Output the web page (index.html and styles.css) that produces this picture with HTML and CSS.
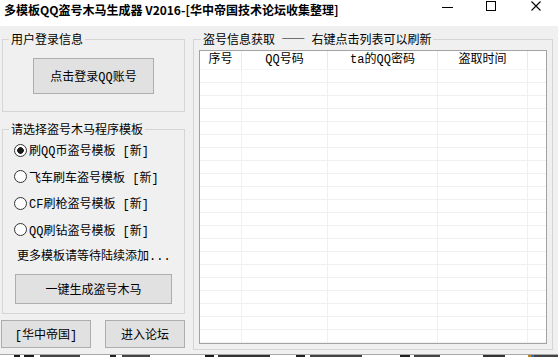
FILE: index.html
```html
<!DOCTYPE html>
<html lang="zh-CN">
<head>
<meta charset="utf-8">
<title>多模板QQ盗号木马生成器</title>
<link rel="stylesheet" href="styles.css">
</head>
<body>
<div class="window">
  <div class="titlebar">
    <span class="title">多模板QQ盗号木马生成器 V2016-[华中帝国技术论坛收集整理]</span>
    <div class="controls">
      <svg class="ic-min" width="11" height="11" viewBox="0 0 11 11"><line x1="0" y1="6.5" x2="11" y2="6.5" stroke="#000" stroke-width="1"/></svg>
      <svg class="ic-max" width="10" height="10" viewBox="0 0 10 10"><rect x="0.5" y="0.5" width="9" height="9" fill="none" stroke="#000" stroke-width="1"/></svg>
      <svg class="ic-close" width="10" height="10" viewBox="0 0 10 10"><path d="M0.5 0.5 L9.5 9.5 M9.5 0.5 L0.5 9.5" stroke="#000" stroke-width="1.1" fill="none"/></svg>
    </div>
  </div>
  <div class="client">
    <div class="left">
      <fieldset class="group g-login">
        <legend>用户登录信息</legend>
        <button class="btn btn-login">点击登录QQ账号</button>
      </fieldset>
      <fieldset class="group g-tpl">
        <legend>请选择盗号木马程序模板</legend>
        <div class="radio-row"><span class="radio checked"></span><span>刷QQ币盗号模板 [新]</span></div>
        <div class="radio-row"><span class="radio"></span><span>飞车刷车盗号模板 [新]</span></div>
        <div class="radio-row"><span class="radio"></span><span>CF刷枪盗号模板 [新]</span></div>
        <div class="radio-row"><span class="radio"></span><span>QQ刷钻盗号模板 [新]</span></div>
        <div class="more">更多模板请等待陆续添加...</div>
        <button class="btn btn-gen">一键生成盗号木马</button>
      </fieldset>
      <div class="bottom-btns">
        <button class="btn btn-hz">[华中帝国]</button>
        <button class="btn btn-forum">进入论坛</button>
      </div>
    </div>
    <fieldset class="group g-info">
      <legend>盗号信息获取 —— 右键点击列表可以刷新</legend>
      <div class="list">
        <div class="list-head">
          <div class="col c1">序号</div>
          <div class="col c2">QQ号码</div>
          <div class="col c3">ta的QQ密码</div>
          <div class="col c4">盗取时间</div>
          <div class="col c5"></div>
        </div>
        <div class="list-body">
          <div class="bcol c1"></div>
          <div class="bcol c2"></div>
          <div class="bcol c3"></div>
          <div class="bcol c4"></div>
          <div class="bcol c5"></div>
        </div>
      </div>
    </fieldset>
  </div>
  <div class="strip"></div>
</div>
</body>
</html>
```

FILE: styles.css
```css
* { box-sizing: border-box; }
html, body { margin: 0; padding: 0; background: #f0f0f0; }
body {
  width: 558px;
  height: 357px;
  overflow: hidden;
  font-family: "Liberation Mono", "Noto Sans CJK SC", monospace;
  font-size: 12px;
  color: #000;
}
.window {
  width: 558px;
  height: 357px;
  display: flex;
  flex-direction: column;
  overflow: hidden;
}
.titlebar {
  height: 26px;
  flex: none;
  background: #fff;
  display: flex;
  align-items: flex-start;
}
.title {
  font-family: "Noto Sans CJK SC", sans-serif;
  font-weight: bold;
  font-size: 12px;
  line-height: 14px;
  padding: 3px 0 0 4px;
  white-space: nowrap;
}
.controls {
  margin-left: auto;
  display: flex;
  align-items: flex-start;
  padding: 1px 17px 0 0;
}
.ic-min { display: block; }
.ic-max { display: block; margin-left: 33px; }
.ic-close { display: block; margin-left: 35px; }

.client {
  flex: none;
  height: 328px;
  background: #f0f0f0;
  display: flex;
  align-items: flex-start;
  padding-top: 6px;
}
.left {
  margin-left: 2px;
  width: 183px;
  display: flex;
  flex-direction: column;
}
.group {
  margin: 0;
  padding: 0;
  min-width: 0;
  border: 1px solid #d5d5d5;
}
.group legend {
  padding: 0 2px;
  margin-left: 6px;
  font-size: 12px;
  line-height: 14px;
  font-family: "Noto Sans CJK SC", sans-serif;
  white-space: nowrap;
}
.btn {
  display: block;
  font-family: "Liberation Mono", "Noto Sans CJK SC", monospace;
  font-size: 12px;
  color: #000;
  background: #e1e1e1;
  border: 1px solid #adadad;
  padding: 0;
  margin: 0;
}
.g-login { height: 80px; }
.btn-login {
  width: 121px;
  height: 36px;
  margin: 12px auto 0;
}
.g-tpl {
  margin-top: 10px;
  height: 192px;
}
.radio-row {
  height: 26.5px;
  display: flex;
  align-items: center;
  padding-left: 11px;
  white-space: nowrap;
}
.radio-row:first-of-type { margin-top: 1px; }
.radio {
  width: 13px;
  height: 13px;
  border-radius: 50%;
  border: 1px solid #333;
  background: #fff;
  margin-right: 2px;
  flex: none;
}
.radio.checked {
  background: radial-gradient(circle at center, #1a1a1a 0 3px, #fff 3.6px);
}
.more {
  height: 28px;
  line-height: 28px;
  padding-left: 14px;
  white-space: nowrap;
}
.btn-gen {
  width: 157px;
  height: 30px;
  margin: 3px auto 0;
}
.bottom-btns {
  display: flex;
  margin-top: 6px;
  margin-left: -1px;
}
.btn-hz { width: 90px; height: 28px; }
.btn-forum { width: 80px; height: 28px; margin-left: 14px; }

.g-info {
  margin-left: 8px;
  width: 360px;
  height: 318px;
}
.g-info legend { margin-left: 7px; word-spacing: 3.5px; }
.list {
  margin: 4px 0 0 5px;
  width: 348px;
  height: 294px;
  border: 1px solid #a3a3a3;
  background: #fff;
  display: flex;
  flex-direction: column;
  overflow: hidden;
}
.list-head {
  display: flex;
  height: 19px;
  flex: none;
  border-bottom: 1px solid #f3f5f9;
}
.col {
  height: 18px;
  line-height: 18px;
  text-align: center;
  border-right: 1px solid #e2eaf5;
  white-space: nowrap;
}
.c1 { width: 42px; flex: none; }
.c2 { width: 86px; flex: none; }
.c3 { width: 110px; flex: none; }
.c4 { width: 90px; flex: none; }
.c5 { flex: 1; }
.list-head .c5 { border-right: none; }
.list-body {
  flex: 1;
  display: flex;
}
.bcol {
  height: 100%;
  border-right: 1px solid #f0f0f0;
  background: repeating-linear-gradient(to bottom, transparent 0 12px, #f0f0f0 12px 13px);
}
.list-body .c5 { border-right: none; }

.strip {
  flex: none;
  height: 3px;
  border-top: 1px solid #a8a8a8;
  background:
    linear-gradient(90deg, transparent 0 14px, #1a1a1a 14px 20px, transparent 20px 24px, #1a1a1a 24px 34px, transparent 34px 40px, #444 40px 80px, transparent 80px 110px, #222 110px 116px, transparent 116px 122px, #444 122px 150px, transparent 150px 205px, #1a1a1a 205px 214px, transparent 214px 218px, #333 218px 270px, transparent 270px 296px, #222 296px 305px, transparent 305px 310px, #444 310px 362px, transparent 362px 400px, #222 400px 410px, transparent 410px 414px, #444 414px 440px, transparent 440px 483px, #333 483px 505px, transparent 505px 528px, #c08020 528px 531px, #3070c0 531px 534px, #444 534px 558px),
    #ffffff;
}
```
